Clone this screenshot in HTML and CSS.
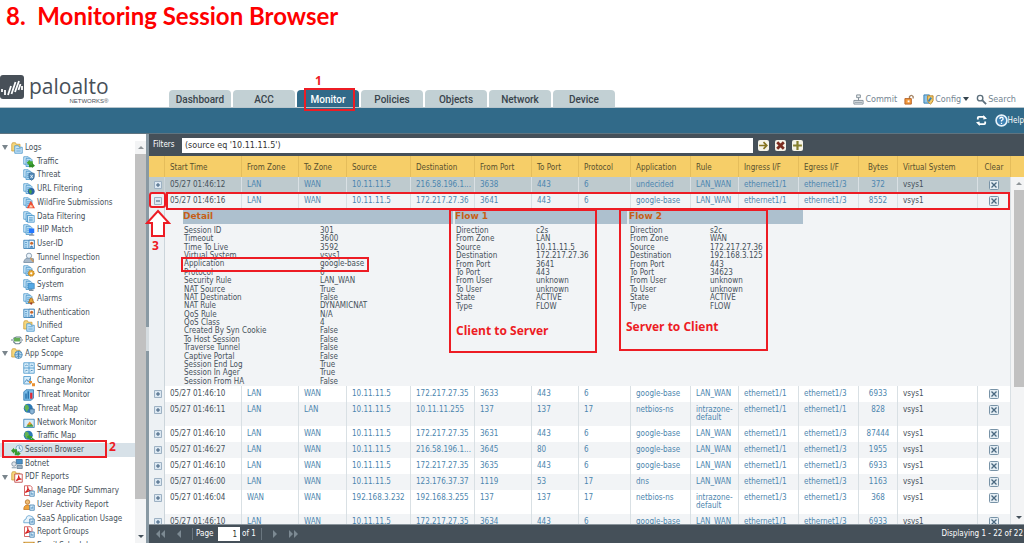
FILE: index.html
```html
<!DOCTYPE html>
<html lang="en">
<head>
  <meta charset="UTF-8" />
  <meta name="viewport" content="width=device-width, initial-scale=1.0"/>
  <title>Monitoring Session Browser</title>
  <link rel="stylesheet" href="styles.css">
</head>
<body>
  <svg class="defs" aria-hidden="true">
    <defs>
      <symbol id="doc" viewBox="0 0 16 16">
        <path d="M1 1h6l2 2v8H1z" fill="#d6ecfa" stroke="#3d8fc6"/>
        <path d="M4 3h6l2 2v9H4z" fill="#b5dcf5" stroke="#3d8fc6"/>
        <path d="M5.500 6.500h5M5.500 9h5M5.500 11.500h5" stroke="#3d8fc6"/>
      </symbol>
      <symbol id="folder" viewBox="0 0 16 16">
        <path d="M1 3l1-2h4l1 2h5v9H1z" fill="#f6d77c" stroke="#c99a35"/>
      </symbol>
      <symbol id="logs" viewBox="0 0 16 16"><use href="#folder"/><path d="M5 5h5l1 2h4v8H5z" fill="#c9e5f8" stroke="#3d8fc6"/><path d="M7 9h6M7 12h6" stroke="#3d8fc6"/></symbol>
      <symbol id="traffic" viewBox="0 0 16 16"><use href="#doc"/><path d="M5 9l4-4v2h4v4H9v2z" fill="#42a82f"/><path d="M16 13l-4-4v2H8v4h4v1z" fill="#2f8d25"/></symbol>
      <symbol id="threat" viewBox="0 0 16 16"><use href="#doc"/><path d="M8 6l3-1 4 1v4q0 4-4 5-3-2-3-5z" fill="#5a8fbd" stroke="#34648f"/><path d="M10 8l3 4m0-4l-3 4" stroke="#fff"/></symbol>
      <symbol id="url" viewBox="0 0 16 16"><use href="#doc"/><circle cx="11" cy="11" r="4.500" fill="#2a62a4"/><path d="M8 8l3 1 1 3-2 3-2-3z" fill="#43a047"/></symbol>
      <symbol id="wildfire" viewBox="0 0 16 16"><use href="#doc"/><path d="M10.500 5L16 15H5z" fill="#ef4b32"/><path d="M8 14l2-4 1 2 1-2 1 4z" fill="#ffd3b0"/></symbol>
      <symbol id="data" viewBox="0 0 16 16"><use href="#doc"/><path d="M6 6h9v9H6z" fill="#d6ecfa" stroke="#3d8fc6"/><path d="M8 9h5M8 11h5M8 13h5" stroke="#3d8fc6"/></symbol>
      <symbol id="hip" viewBox="0 0 16 16"><use href="#doc"/><path d="M8 6h7v6H8z" fill="#2478ff"/><path d="M11 12h2v2h2v1.500H8V14h3z" fill="#8897a9"/></symbol>
      <symbol id="user" viewBox="0 0 16 16"><path d="M1 3h14v11H1z" fill="#b9def5" stroke="#2873ad"/><path d="M3 6h2M3 9h2M3 12h2" stroke="#2873ad"/><path d="M8 3h7v11H8z" fill="#fff" stroke="#2873ad"/><circle cx="11.500" cy="7" r="2" fill="#c8672c"/><path d="M9 13q2-6 5 0z" fill="#3e80bd"/></symbol>
      <symbol id="tunnel" viewBox="0 0 16 16"><path d="M1 13q2-6 7-5l6 1v5H1z" fill="#a8b9c9" stroke="#6f879d"/><circle cx="8" cy="5" r="3.500" fill="#e8f2fa" stroke="#6f879d"/><path d="M10 8l4 5" stroke="#d19a5a" stroke-width="2"/></symbol>
      <symbol id="config" viewBox="0 0 16 16"><use href="#doc"/><circle cx="11" cy="11" r="4" fill="#e9a62e" stroke="#a36c15" stroke-dasharray="2 1"/><circle cx="11" cy="11" r="1.500" fill="#fff"/></symbol>
      <symbol id="system" viewBox="0 0 16 16"><use href="#doc"/><path d="M7 6h8v7H7z" fill="#55a9e5" stroke="#3e87bf"/><path d="M8 15h6" stroke="#82909c" stroke-width="2"/></symbol>
      <symbol id="alarm" viewBox="0 0 16 16"><use href="#doc"/><path d="M7 13q2-2 2-5 2-3 4 0 0 3 2 5z" fill="#e4a43a" stroke="#a66517"/><circle cx="11" cy="14" r="1.500" fill="#a43622"/></symbol>
      <symbol id="capture" viewBox="0 0 16 16"><path d="M0 8h16M3 6l4-2h5l2 2M3 10l3 3h5l3-3" fill="none" stroke="#6b8090" stroke-width="1.500"/><path d="M4 5h8v5H4z" fill="#65ad57"/></symbol>
      <symbol id="scope" viewBox="0 0 16 16"><use href="#folder"/><circle cx="10" cy="9" r="5" fill="#c5e1f5" stroke="#3a7dae"/><path d="M5 9h10M10 4v10M7 6q3 3 6 0M7 12q3-3 6 0" stroke="#3a7dae" fill="none"/></symbol>
      <symbol id="summary" viewBox="0 0 16 16"><path d="M1 1h14v14H1zM1 8h14M8 1v14" fill="#d8eefb" stroke="#3d8fc6"/><path d="M3 5l2-1 1 1M10 5l2-1 1 1M3 12l2-1 1 1M10 12l2-1 1 1" stroke="#2b76ad" fill="none"/></symbol>
      <symbol id="change" viewBox="0 0 16 16"><path d="M1 2h9v10H1z" fill="#d6ecfa" stroke="#3d8fc6"/><path d="M2 10l3-4 2 3 3-5" stroke="#2873ad" fill="none"/><path d="M8 8h4v3H8zM12 11h4v4h-4z" fill="#e99131"/></symbol>
      <symbol id="tmonitor" viewBox="0 0 16 16"><path d="M1 4l3-3h10v11l-3 3H1z" fill="#79bce7" stroke="#2873ad"/><path d="M4 6v7M7 3v10" stroke="#2873ad" stroke-width="2"/><path d="M11 5v8" stroke="#e02835" stroke-width="3"/></symbol>
      <symbol id="map" viewBox="0 0 16 16"><circle cx="7" cy="7" r="6" fill="#2b78b5"/><path d="M3 2l4 1 1 4-3 5-3-5z" fill="#65b354"/><path d="M9 8h6v5l-3 2-3-2z" fill="#89b5d7" stroke="#34648f"/></symbol>
      <symbol id="net" viewBox="0 0 16 16"><path d="M1 3h14v11H1z" fill="#d6ecfa" stroke="#2873ad"/><path d="M5 11l4-5 5 6z" fill="#e9942e"/><path d="M4 13l3-3 2 1 2-2 3 4z" fill="#43a047"/></symbol>
      <symbol id="tmap" viewBox="0 0 16 16"><circle cx="7" cy="7" r="6" fill="#2b78b5"/><path d="M3 2l4 1 1 4-3 5-3-5z" fill="#65b354"/><path d="M5 9l4-3v2h3v3H9v2zM16 13l-4-3v2H9v3h3v1z" fill="#36a02b"/></symbol>
      <symbol id="session" viewBox="0 0 16 16"><circle cx="11" cy="6" r="4.500" fill="#e5f3fc" stroke="#659cc3"/><path d="M11 3v3l2 1" stroke="#316e9c" fill="none"/><path d="M0 9l4-4v2h4v4H4v2zM13 13L9 9v2H5v4h4v1z" fill="#399c31"/></symbol>
      <symbol id="botnet" viewBox="0 0 16 16"><path d="M7 2h8v6H7z" fill="#4b91c7" stroke="#32668e"/><circle cx="4" cy="8" r="3" fill="#e1e7ec" stroke="#6f8395"/><path d="M1 13h6M8 10h7v4H8z" stroke="#627b90" fill="#98b0c3"/></symbol>
      <symbol id="pdff" viewBox="0 0 16 16"><use href="#folder"/><path d="M5 4h10v11H5z" fill="#fff" stroke="#b72f2f"/><path d="M7 13q4-4 3-7 1 5 4 5-4-1-7 2" stroke="#d82020" fill="none" stroke-width="1.500"/></symbol>
      <symbol id="pdf" viewBox="0 0 16 16"><path d="M2 1h8l2 2v11H2z" fill="#fff" stroke="#c63838"/><path d="M3 10q5-4 3-8 1 6 5 6-4-1-8 2" stroke="#d82020" fill="none" stroke-width="1.500"/><path d="M9 8h6v7H9z" fill="#d6ecfa" stroke="#3677aa"/><path d="M11 10v3M13 11v2" stroke="#2873ad"/></symbol>
      <symbol id="activity" viewBox="0 0 16 16"><circle cx="6" cy="4" r="3" fill="#eebd75" stroke="#b66e25"/><path d="M1 14q0-6 5-6t5 6z" fill="#f0a33b" stroke="#bd7421"/><path d="M9 8h6v7H9z" fill="#d6ecfa" stroke="#3677aa"/><path d="M11 11v2M13 10v3" stroke="#2873ad"/></symbol>
      <symbol id="saas" viewBox="0 0 16 16"><path d="M1 13q-1-4 3-5 1-6 6-4 4 0 4 5v4z" fill="#e9f4fc" stroke="#5499cb"/><path d="M9 8h6v7H9z" fill="#d6ecfa" stroke="#3677aa"/><path d="M11 11v2M13 10v3" stroke="#2873ad"/></symbol>
      <symbol id="mail" viewBox="0 0 16 16"><path d="M1 3h14v10H1z" fill="#f4c55f" stroke="#c28a2b"/><path d="M1 3l7 6 7-6" fill="none" stroke="#b77a20"/></symbol>
      <symbol id="plus" viewBox="0 0 8 8"><path d="M.5 .5h7v7h-7z" fill="#dce8f2" stroke="#9db1c3"/><path d="M2 4h4M4 2v4" stroke="#3c5d7c"/></symbol>
      <symbol id="minus" viewBox="0 0 8 8"><path d="M.5 .5h7v7h-7z" fill="#dce8f2" stroke="#9db1c3"/><path d="M2 4h4" stroke="#3c5d7c"/></symbol>
      <symbol id="clear" viewBox="0 0 10 10"><rect x=".5" y=".5" width="9" height="9" rx="1" fill="#e4edf3" stroke="#7893a7"/><path d="M2.500 2.500l5 5m0-5l-5 5" stroke="#4a6880" stroke-width="1.300"/></symbol>
    </defs>
  </svg>

  <header>
    <h1>8.&nbsp; Monitoring Session Browser</h1>
    <div class="top">
      <div class="brand">
        <svg class="logo" viewBox="0 0 24 24"><rect width="24" height="24" rx="3" fill="#485058"/><path d="M2 14v3M5 15v5M8 20l3-9M11.500 19l4-12M15 17l4-11M18.500 15l2-6M22 11v4" stroke="#fff" stroke-width="1.800" fill="none"/></svg>
        <div class="wordmark"><span>paloalto</span><small>NETWORKS®</small></div>
      </div>
      <nav class="tabs">
        <a href="#">Dashboard</a>
        <a href="#">ACC</a>
        <a href="#" class="active">Monitor</a>
        <a href="#">Policies</a>
        <a href="#">Objects</a>
        <a href="#">Network</a>
        <a href="#">Device</a>
      </nav>
      <div class="tools">
        <button><svg viewBox="0 0 12 12"><path d="M4 1h4v3H4zM6 4v3M1 7h10v4H1zM2 9h8" fill="#eef1f3" stroke="#7e8b95"/></svg>Commit</button>
        <button aria-label="Lock"><svg viewBox="0 0 12 12"><path d="M6 6V3q2-3 4 0v2" fill="none" stroke="#a48566" stroke-width="1.500"/><path d="M1 5h7v6H1z" fill="#f39a3c" stroke="#b56025"/><path d="M4 7h2v2H4z" fill="#fff"/></svg></button>
        <button><svg viewBox="0 0 12 12"><path d="M1 1h6v9H1z" fill="#8dc4ea" stroke="#347cad"/><path d="M5 2h6v5q-1 3-3 4-3-2-3-4z" fill="#f2cb69" stroke="#b98226"/><path d="M6 8l3-4" stroke="#3c83b4" stroke-width="2"/></svg>Config<i class="caret"></i></button>
        <button><svg viewBox="0 0 12 12"><circle cx="4.500" cy="4.500" r="3" fill="#fff" stroke="#5c6f7c" stroke-width="1.500"/><path d="M7 7l4 4" stroke="#5c6f7c" stroke-width="2"/></svg>Search</button>
      </div>
    </div>
  </header>

  <div class="bluebar">
    <button aria-label="Refresh"><svg viewBox="0 0 12 12"><path d="M2 5V3q0-1 1-1h6M10 7v2q0 1-1 1H3" fill="none" stroke="#fff" stroke-width="2"/><path d="M8 0l4 4-4 1zM4 12L0 8l4-1z" fill="#fff"/></svg></button>
    <button class="help"><svg viewBox="0 0 12 12"><circle cx="6" cy="6" r="5" fill="#3e82b4" stroke="#e9f3fa" stroke-width="1.500"/><path d="M4.500 4.500q0-1.500 1.500-1.500t1.500 1.500q0 1-1.500 1.500v1M6 8v1.200" fill="none" stroke="#fff" stroke-width="1.200"/></svg>Help</button>
  </div>

  <div class="content">
    <aside>
      <ul class="tree" id="tree"></ul>
      <div class="scrollbar"><i class="up"></i><b></b><i class="down"></i></div>
    </aside>
    <div class="splitter"><span></span></div>
    <main>
      <form class="filters">
        <label for="filter">Filters</label>
        <input type="text" id="filter" value="(source eq '10.11.11.5')">
        <div class="actions">
          <button type="button" aria-label="Apply filter"><svg viewBox="0 0 10 10"><path d="M1 5h7M5 2l3 3-3 3" stroke="#85731f" stroke-width="1.500" fill="none"/></svg></button>
          <button type="button" aria-label="Clear filter"><svg viewBox="0 0 10 10"><path d="M2 2l6 6m0-6L2 8" stroke="#7b2c20" stroke-width="2.500"/></svg></button>
          <button type="button" aria-label="Add filter"><svg viewBox="0 0 10 10"><path d="M1 5h8M5 1v8" stroke="#85802f" stroke-width="2"/></svg></button>
        </div>
      </form>

      <div class="grid">
        <table class="sessions">
          <colgroup>
            <col class="c16"><col class="c77"><col class="c57"><col class="c48"><col class="c64"><col class="c64">
            <col class="c57"><col class="c47"><col class="c52"><col class="c60"><col class="c48"><col class="c60">
            <col class="c60"><col class="c39"><col class="c80"><col class="c33">
          </colgroup>
          <thead>
            <tr>
              <th></th><th>Start Time</th><th>From Zone</th><th>To Zone</th><th>Source</th><th>Destination</th>
              <th>From Port</th><th>To Port</th><th>Protocol</th><th>Application</th><th>Rule</th><th>Ingress I/F</th>
              <th>Egress I/F</th><th class="center">Bytes</th><th>Virtual System</th><th class="center">Clear</th>
            </tr>
          </thead>
          <tbody id="rows">
            <tr class="expanded">
              <td class="expander"></td>
              <td colspan="15">
                <div class="panels">
                  <section class="detail">
                    <h2>Detail</h2>
                    <dl>
                      <dt>Session ID</dt><dd>301</dd>
                      <dt>Timeout</dt><dd>3600</dd>
                      <dt>Time To Live</dt><dd>3592</dd>
                      <dt>Virtual System</dt><dd>vsys1</dd>
                      <dt>Application</dt><dd>google-base</dd>
                      <dt>Protocol</dt><dd>6</dd>
                      <dt>Security Rule</dt><dd>LAN_WAN</dd>
                      <dt>NAT Source</dt><dd>True</dd>
                      <dt>NAT Destination</dt><dd>False</dd>
                      <dt>NAT Rule</dt><dd>DYNAMICNAT</dd>
                      <dt>QoS Rule</dt><dd>N/A</dd>
                      <dt>QoS Class</dt><dd>4</dd>
                      <dt>Created By Syn Cookie</dt><dd>False</dd>
                      <dt>To Host Session</dt><dd>False</dd>
                      <dt>Traverse Tunnel</dt><dd>False</dd>
                      <dt>Captive Portal</dt><dd>False</dd>
                      <dt>Session End Log</dt><dd>True</dd>
                      <dt>Session In Ager</dt><dd>True</dd>
                      <dt>Session From HA</dt><dd>False</dd>
                    </dl>
                  </section>
                  <section class="flow">
                    <h2>Flow 1</h2>
                    <dl>
                      <dt>Direction</dt><dd>c2s</dd>
                      <dt>From Zone</dt><dd>LAN</dd>
                      <dt>Source</dt><dd>10.11.11.5</dd>
                      <dt>Destination</dt><dd>172.217.27.36</dd>
                      <dt>From Port</dt><dd>3641</dd>
                      <dt>To Port</dt><dd>443</dd>
                      <dt>From User</dt><dd>unknown</dd>
                      <dt>To User</dt><dd>unknown</dd>
                      <dt>State</dt><dd>ACTIVE</dd>
                      <dt>Type</dt><dd>FLOW</dd>
                    </dl>
                  </section>
                  <section class="flow">
                    <h2>Flow 2</h2>
                    <dl>
                      <dt>Direction</dt><dd>s2c</dd>
                      <dt>From Zone</dt><dd>WAN</dd>
                      <dt>Source</dt><dd>172.217.27.36</dd>
                      <dt>Destination</dt><dd>192.168.3.125</dd>
                      <dt>From Port</dt><dd>443</dd>
                      <dt>To Port</dt><dd>34623</dd>
                      <dt>From User</dt><dd>unknown</dd>
                      <dt>To User</dt><dd>unknown</dd>
                      <dt>State</dt><dd>ACTIVE</dd>
                      <dt>Type</dt><dd>FLOW</dd>
                    </dl>
                  </section>
                </div>
              </td>
            </tr>
          </tbody>
        </table>
        <div class="scrollbar right"><i class="up"></i><b></b><i class="down"></i></div>
      </div>

      <footer>
        <button aria-label="First page"><svg viewBox="0 0 12 8"><path d="M1 0v8M6 0L2 4l4 4zM11 0L7 4l4 4z"/></svg></button>
        <button aria-label="Previous page"><svg viewBox="0 0 12 8"><path d="M8 0L4 4l4 4z"/></svg></button>
        <label for="page">Page</label>
        <input type="text" id="page" value="1">
        <span class="of">of 1</span>
        <button aria-label="Next page"><svg viewBox="0 0 12 8"><path d="M4 0l4 4-4 4z"/></svg></button>
        <button aria-label="Last page"><svg viewBox="0 0 12 8"><path d="M1 0l4 4-4 4zM6 0l4 4-4 4zM11 0v8"/></svg></button>
        <span class="count">Displaying 1 - 22 of 22</span>
      </footer>
    </main>
  </div>

  <!-- walkthrough callouts -->
  <div class="mark m-tab"></div>
  <div class="mark m-tree"></div>
  <div class="mark m-minus"></div>
  <div class="mark m-row"></div>
  <div class="mark m-app"></div>
  <div class="mark m-flow1"><p>Client to Server</p></div>
  <div class="mark m-flow2"><p>Server to Client</p></div>
  <svg class="arrow" viewBox="0 0 26 30"><path d="M13 2l11 12h-5v13H7V14H2z" fill="#fff" stroke="#ed1c24" stroke-width="2"/></svg>
  <span class="step s1">1</span>
  <span class="step s2">2</span>
  <span class="step s3">3</span>

  <script src="script.js"></script>
</body>
</html>
```
FILE: styles.css
```css
* { box-sizing: border-box; }
body {
  margin: 0;
  height: 100vh;
  display: flex;
  flex-direction: column;
  position: relative;
  overflow: hidden;
  background: #fff;
  color: #46515a;
  font-family: "DejaVu Sans Condensed", "Noto Sans", sans-serif;
  font-size: 8px;
  line-height: 8px;
}
a { color: inherit; text-decoration: none; }
button {
  display: flex;
  align-items: center;
  padding: 0;
  border: 0;
  background: none;
  color: inherit;
  font: inherit;
}
.defs { position: absolute; width: 0; height: 0; }

header { height: 108px; display: flex; flex-direction: column; justify-content: space-between; }
h1 {
  margin: 0;
  padding: 3px 6px;
  color: #fe0000;
  font: bold 24px/26px Lato, sans-serif;
}
.top { display: flex; align-items: flex-end; border-bottom: 1px solid #b7c5cc; }
.brand { width: 169px; display: flex; gap: 5px; padding-bottom: 2px; }
.logo { width: 24px; height: 24px; }
.wordmark { display: flex; flex-direction: column; color: #485058; }
.wordmark span { font: 500 21px/22px "Open Sans", sans-serif; }
.wordmark small { font: 6px/8px "Liberation Sans", sans-serif; text-align: right; }
.tabs { display: flex; gap: 2px; }
.tabs a {
  width: 62px;
  height: 17px;
  border-radius: 4px 4px 0 0;
  background: #c2d0d4;
  color: #39444c;
  font: 500 10px/20px Roboto, sans-serif;
  text-align: center;
}
.tabs .active { background: #316a89; color: #fff; }
.tools { margin-left: auto; display: flex; gap: 7px; padding: 0 8px 2px 0; color: #758692; font: 9px/12px "DejaVu Sans Condensed", sans-serif; }
.tools svg { width: 11px; height: 11px; margin-right: 1px; }
.caret { margin-left: 2px; border: 3px solid transparent; border-top: 4px solid #34434d; border-bottom: 0; }

.bluebar {
  height: 26px;
  flex: none;
  display: flex;
  justify-content: flex-end;
  gap: 8px;
  background: #316a89;
  border-bottom: 1px solid #5f7480;
  color: #fff;
  font: 8px/12px "DejaVu Sans Condensed", sans-serif;
}
.bluebar svg { width: 11px; height: 11px; }
.help svg { width: 13px; height: 13px; }

.content { flex: 1; min-height: 0; display: flex; }
aside { width: 146px; flex: none; display: flex; padding-top: 7px; }
.tree { flex: 1; margin: 0 0 -10px; padding: 0; list-style: none; display: grid; grid-auto-rows: 1fr; }
.tree li { min-height: 0; display: flex; align-items: center; padding-left: 11px; }
.tree a { display: flex; align-items: center; gap: 2px; white-space: nowrap; }
.tree svg { width: 12px; height: 12px; }
.tree .group { padding-left: 2px; }
.tree .group::before {
  content: "";
  margin-right: 3px;
  border: 3px solid transparent;
  border-top: 5px solid #7a858c;
  border-bottom: 0;
}
.tree .child { padding-left: 23px; }
.tree .selected { background: #d7e1e8; }

.scrollbar { width: 11px; display: flex; flex-direction: column; align-items: center; background: #f3f4f5; padding: 5px 0; }
.scrollbar b { width: 100%; height: 345px; margin: 5px 0 auto; background: #c1c1c1; }
.scrollbar .up { border: 3px solid transparent; border-bottom: 3px solid #8f9599; border-top: 0; }
.scrollbar .down { border: 3px solid transparent; border-top: 3px solid #44505a; border-bottom: 0; }
.splitter { width: 3px; flex: none; display: flex; align-items: center; background: #8999a3; }
.splitter span { width: 3px; height: 24px; background: #d5dce0; }

main { flex: 1; min-width: 0; display: flex; flex-direction: column; }
.filters { height: 22px; flex: none; display: flex; align-items: center; gap: 5px; padding: 0 4px; background: #455059; color: #fff; }
.filters label { width: 24px; }
.filters input { flex: 1; min-width: 0; height: 15px; padding: 0 3px; border: 0; color: #333; font: 8px/14px "DejaVu Sans", sans-serif; }
.actions { width: 262px; display: flex; gap: 6px; }
.filters button { width: 11px; height: 11px; border-radius: 2px; background: #f5f3e8; }

.grid { flex: 1; min-height: 0; overflow: hidden; display: flex; background: #f6ce68; }
.sessions { flex: 1; width: 100%; align-self: flex-start; table-layout: fixed; border-collapse: separate; border-spacing: 0; }
.c16 { width: 16px; }
.c33 { width: 33px; }
.c39 { width: 39px; }
.c47 { width: 47px; }
.c48 { width: 48px; }
.c52 { width: 52px; }
.c57 { width: 57px; }
.c60 { width: 60px; }
.c64 { width: 64px; }
.c77 { width: 77px; }
.c80 { width: 80px; }
.sessions th {
  height: 21px;
  padding: 2px 0 0 5px;
  background: #f6ce68;
  border-right: 1px solid #e5bd5b;
  color: #56502f;
  font-weight: normal;
  text-align: left;
  white-space: nowrap;
}
.sessions td { padding: 4px 0 4px 5px; border-right: 1px solid #d9e0e4; vertical-align: top; white-space: nowrap; }
.sessions td a { display: block; color: #4d86ae; }
.sessions td a.wrap { white-space: normal; }
.sessions tr { background: #fff; }
.sessions .alt, .sessions .expanded { background: #f2f4f6; }
.sessions .hover { background: #becace; }
.sessions .center { padding-left: 0; text-align: center; }
.sessions .expander { background: #edf1f4; border-color: #ccd5db; }
.sessions .hover .expander { background: #becace; }
.sessions td button { height: 8px; }
.expander svg { width: 8px; height: 8px; }
.sessions .center button { margin: auto; }
.center svg { width: 10px; height: 10px; }

.sessions .expanded td { padding-top: 0; padding-bottom: 0; }
.panels { display: flex; height: 177px; padding: 1px 0 0 13px; }
.panels section { flex: none; }
.detail { width: 272px; }
.flow { width: 174px; }
.panels h2 {
  height: 14px;
  margin: 0 0 3px;
  background: #adc0ce;
  border-right: 2px solid #e4eaee;
  color: #c65f17;
  font: bold 9px/13px "DejaVu Sans", sans-serif;
}
.panels .flow:last-child h2 { border: 0; }
.panels dl { margin: 0; display: grid; grid-template-columns: 80px 1fr; grid-auto-rows: 1fr; height: 84px; padding-left: 1px; }
.panels .detail dl { grid-template-columns: 136px 1fr; height: 159px; }
.panels dt, .panels dd { margin: 0; min-height: 0; }

.scrollbar.right { width: 13px; flex: none; margin-top: 21px; padding: 5px 0 5px 3px; }
.right b { height: 197px; }

footer { height: 19px; flex: none; display: flex; align-items: center; gap: 7px; padding: 0 1px 0 5px; background: #455059; border-top: 1px solid #8a949b; color: #fff; font: 8px/12px "DejaVu Sans Condensed", sans-serif; }
footer svg { width: 12px; height: 8px; fill: #7d8a93; stroke: none; }
footer label { width: 24px; border-left: 1px solid #6a767f; padding-left: 3px; }
footer input { width: 22px; height: 14px; margin: 0 -5px; padding: 0 3px; border: 0; color: #333; font: inherit; text-align: right; }
.of { border-right: 1px solid #6a767f; padding-right: 5px; }
.count { margin-left: auto; }

/* callouts lying over the page */
.mark { position: absolute; border: 2px solid #ed1c24; pointer-events: none; }
.m-tab { left: 304px; top: 88px; width: 51px; height: 23px; }
.m-tree { left: 2px; top: 440px; width: 105px; height: 18px; }
.m-minus { left: 149px; top: 192px; width: 17px; height: 16px; border-radius: 3px; }
.m-row { left: 166px; top: 192px; width: 844px; height: 18px; }
.m-app { left: 181px; top: 257px; width: 188px; height: 15px; }
.m-flow1 { left: 449px; top: 209px; width: 148px; height: 144px; }
.m-flow2 { left: 619px; top: 209px; width: 149px; height: 142px; }
.mark p, .step { margin: 0; color: #ed1c24; font: bold 12px/16px "Open Sans", sans-serif; }
.mark p { padding: 112px 0 0 5px; white-space: nowrap; }
.m-flow2 p { padding-top: 108px; }
.arrow { position: absolute; left: 145px; top: 209px; width: 26px; height: 30px; }
.step { position: absolute; }
.s1 { left: 315px; top: 73px; }
.s2 { left: 109px; top: 439px; }
.s3 { left: 152px; top: 238px; }
```
FILE: script.js
```js
const tree = [
  ['group', 'logs', 'Logs'],
  ['child', 'traffic', 'Traffic'],
  ['child', 'threat', 'Threat'],
  ['child', 'url', 'URL Filtering'],
  ['child', 'wildfire', 'WildFire Submissions'],
  ['child', 'data', 'Data Filtering'],
  ['child', 'hip', 'HIP Match'],
  ['child', 'user', 'User-ID'],
  ['child', 'tunnel', 'Tunnel Inspection'],
  ['child', 'config', 'Configuration'],
  ['child', 'system', 'System'],
  ['child', 'alarm', 'Alarms'],
  ['child', 'user', 'Authentication'],
  ['child', 'logs', 'Unified'],
  ['item', 'capture', 'Packet Capture'],
  ['group', 'scope', 'App Scope'],
  ['child', 'summary', 'Summary'],
  ['child', 'change', 'Change Monitor'],
  ['child', 'tmonitor', 'Threat Monitor'],
  ['child', 'map', 'Threat Map'],
  ['child', 'net', 'Network Monitor'],
  ['child', 'tmap', 'Traffic Map'],
  ['item selected', 'session', 'Session Browser'],
  ['item', 'botnet', 'Botnet'],
  ['group', 'pdff', 'PDF Reports'],
  ['child', 'pdf', 'Manage PDF Summary'],
  ['child', 'activity', 'User Activity Report'],
  ['child', 'saas', 'SaaS Application Usage'],
  ['child', 'pdf', 'Report Groups'],
  ['child', 'mail', 'Email Scheduler']
];

// time, from, to, source, destination, from port, to port, protocol, app, rule, ingress, egress, bytes
const sessions = [
  ['12', 'LAN', 'WAN', '10.11.11.5', '216.58.196.1...', '3638', '443', '6', 'undecided', 'LAN_WAN', '1', '3', '372'],
  ['16', 'LAN', 'WAN', '10.11.11.5', '172.217.27.36', '3641', '443', '6', 'google-base', 'LAN_WAN', '1', '3', '8552'],
  ['10', 'LAN', 'WAN', '10.11.11.5', '172.217.27.35', '3633', '443', '6', 'google-base', 'LAN_WAN', '1', '3', '6933'],
  ['11', 'LAN', 'LAN', '10.11.11.5', '10.11.11.255', '137', '137', '17', 'netbios-ns', 'intrazone-default', '1', '1', '828'],
  ['10', 'LAN', 'WAN', '10.11.11.5', '172.217.27.35', '3631', '443', '6', 'google-base', 'LAN_WAN', '1', '3', '87444'],
  ['27', 'LAN', 'WAN', '10.11.11.5', '216.58.196.1...', '3645', '80', '6', 'google-base', 'LAN_WAN', '1', '3', '1955'],
  ['10', 'LAN', 'WAN', '10.11.11.5', '172.217.27.35', '3635', '443', '6', 'google-base', 'LAN_WAN', '1', '3', '6933'],
  ['00', 'LAN', 'WAN', '10.11.11.5', '123.176.37.37', '1119', '53', '17', 'dns', 'LAN_WAN', '1', '3', '1163'],
  ['04', 'WAN', 'WAN', '192.168.3.232', '192.168.3.255', '137', '137', '17', 'netbios-ns', 'intrazone-default', '3', '3', '368'],
  ['10', 'LAN', 'WAN', '10.11.11.5', '172.217.27.35', '3634', '443', '6', 'google-base', 'LAN_WAN', '1', '3', '6933']
];

const icon = id => `<svg><use href="#${id}"/></svg>`;

document.getElementById('tree').innerHTML = tree
  .map(([cls, id, text]) => `<li class="${cls}"><a href="#">${icon(id)}${text}</a></li>`)
  .join('');

function row(s, i) {
  const cells = s.slice(1).map((v, n) => {
    if (n === 9 || n === 10) v = 'ethernet1/' + v;
    return `<td${n === 11 ? ' class="center"' : ''}><a href="#"${n === 8 ? ' class="wrap"' : ''}>${v}</a></td>`;
  }).join('');
  const cls = i === 0 ? 'hover' : i % 2 ? 'alt' : '';
  return `<tr class="${cls}">
    <td class="expander"><button aria-label="Toggle detail">${icon(i === 1 ? 'minus' : 'plus')}</button></td>
    <td>05/27 01:46:${s[0]}</td>${cells}<td>vsys1</td>
    <td class="center"><button aria-label="Clear session">${icon('clear')}</button></td>
  </tr>`;
}

const html = sessions.map(row);
const rows = document.getElementById('rows');
rows.insertAdjacentHTML('afterbegin', html.slice(0, 2).join(''));
rows.insertAdjacentHTML('beforeend', html.slice(2).join(''));
```
